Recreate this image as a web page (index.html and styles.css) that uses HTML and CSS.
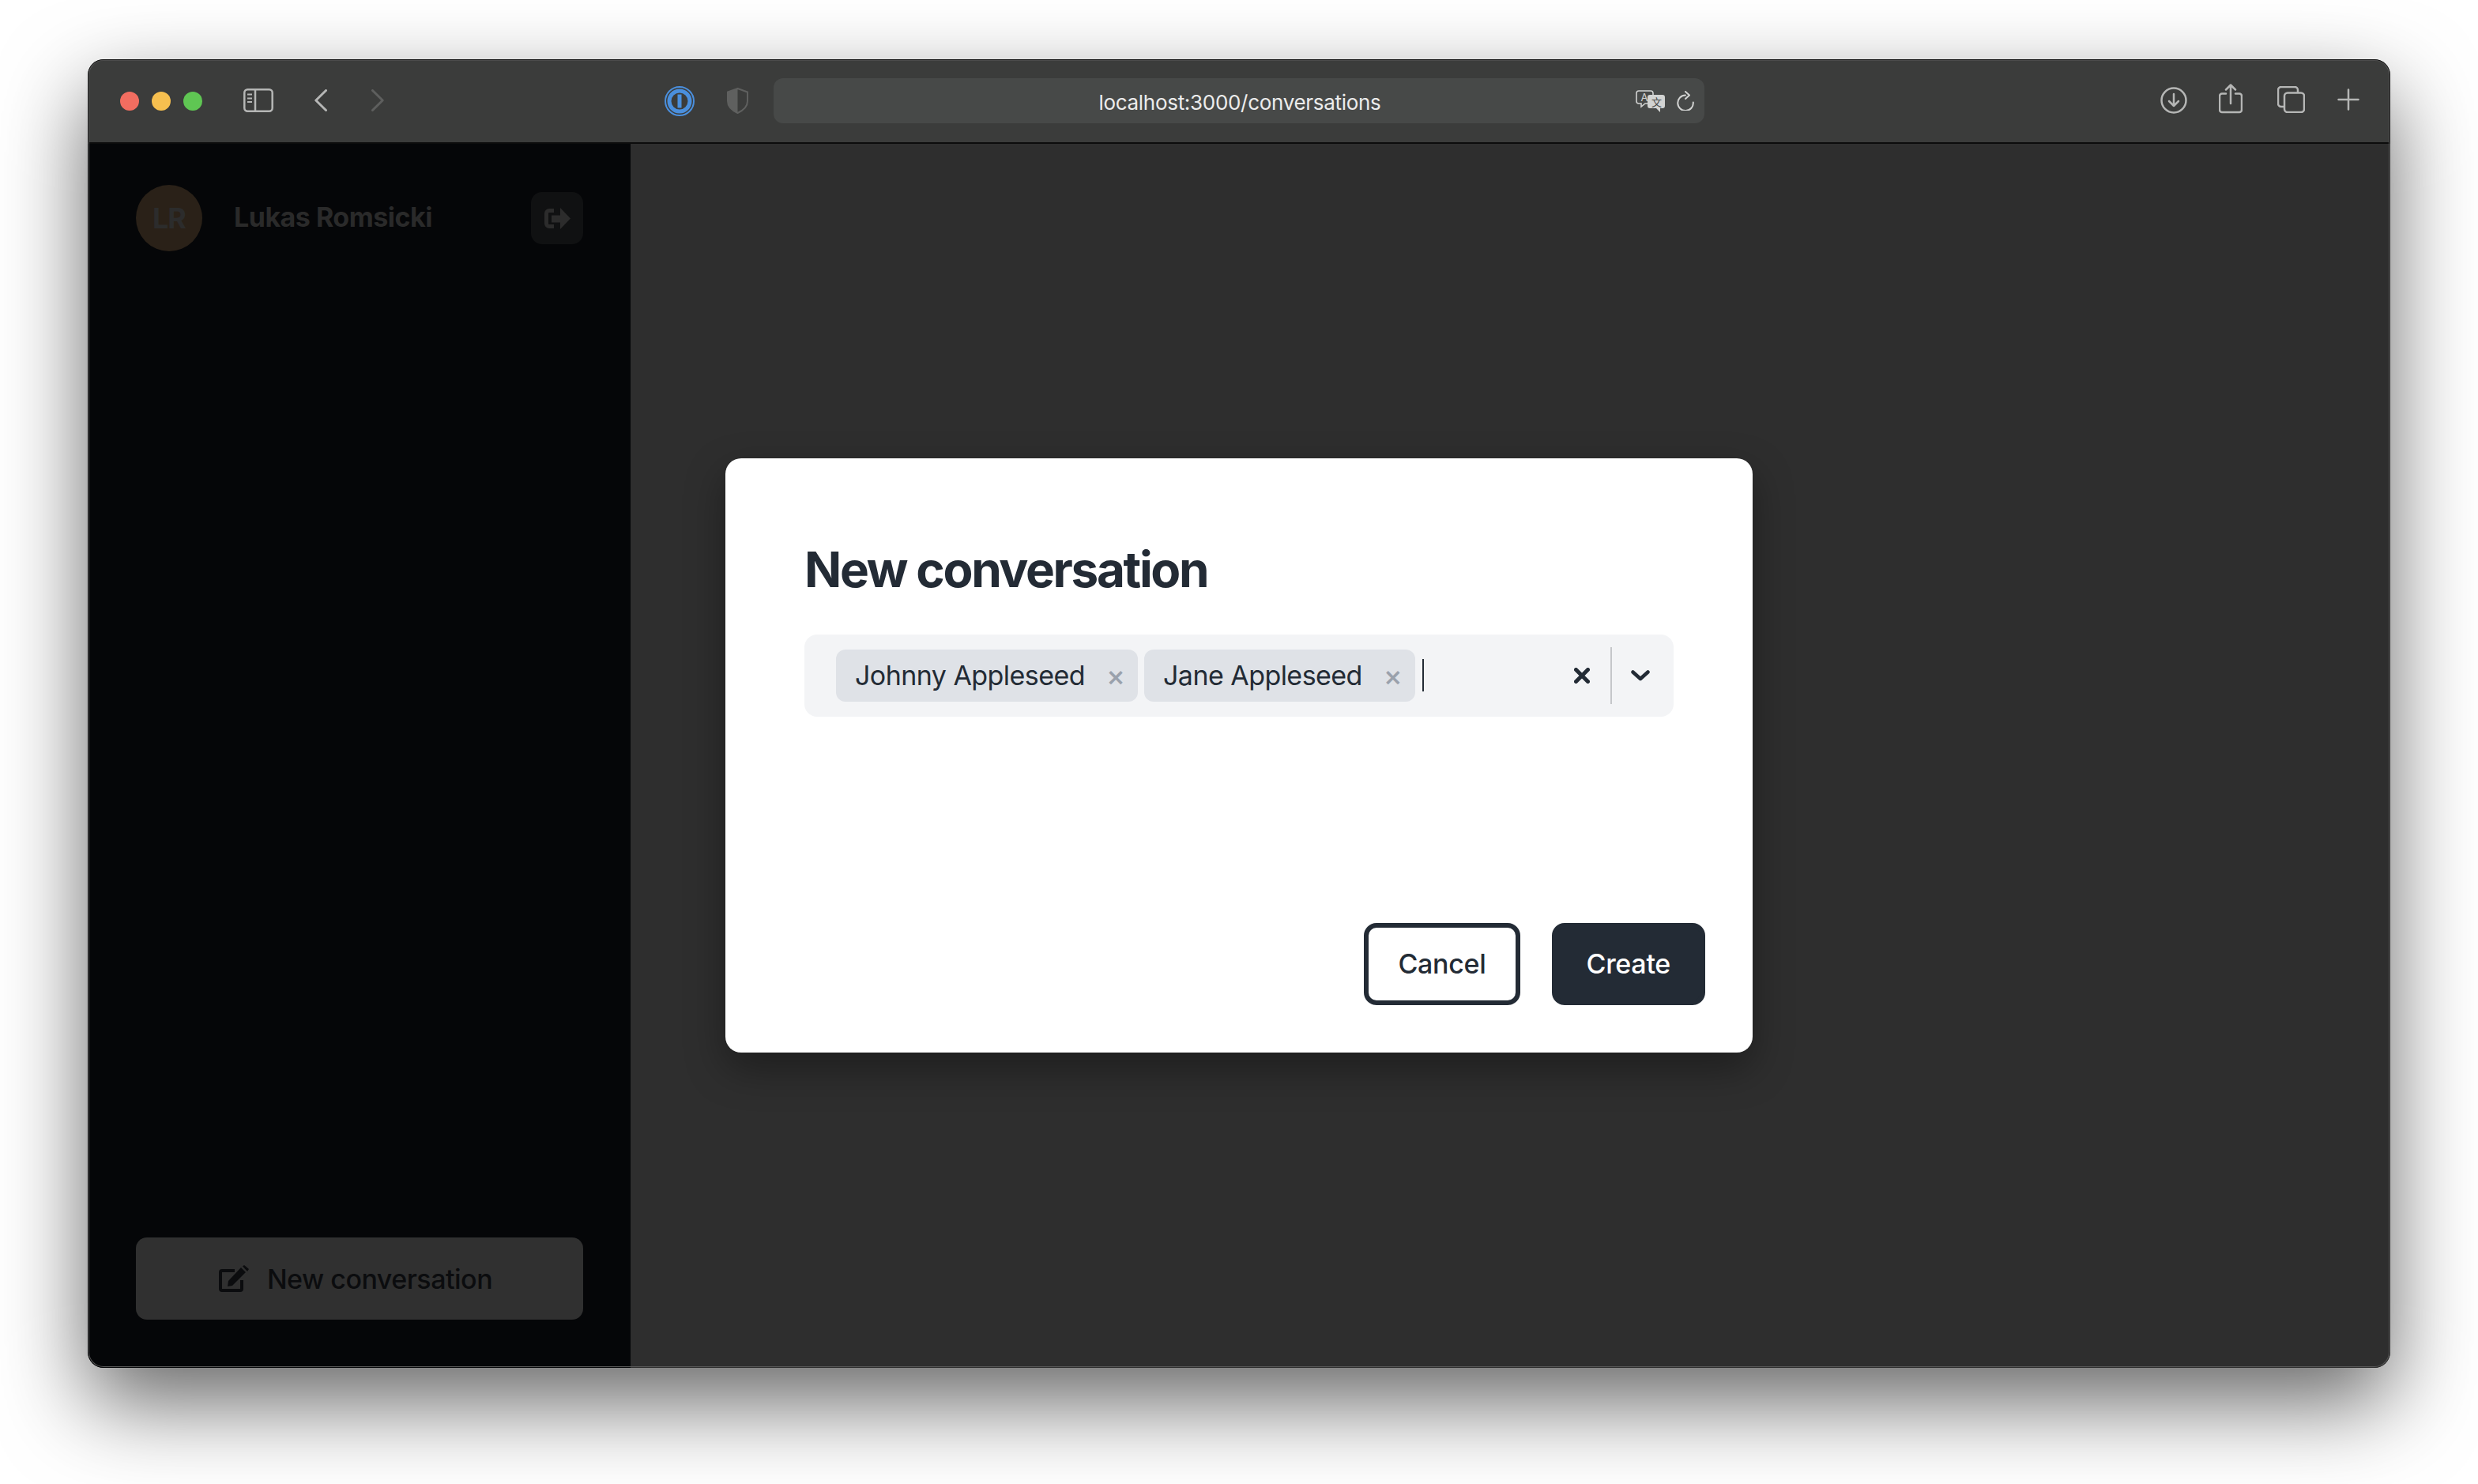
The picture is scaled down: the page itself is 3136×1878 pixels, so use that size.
FILE: index.html
```html
<!DOCTYPE html>
<html lang="en">
<head>
    <meta charset="UTF-8">
    <meta name="viewport" content="width=device-width, initial-scale=1.0">
    <title>New conversation</title>
    <link rel="stylesheet" href="styles.css">
</head>
<body>
    <div class="window">
        <header class="toolbar">
            <div class="lights">
                <span class="light red"></span>
                <span class="light yellow"></span>
                <span class="light green"></span>
            </div>
            <svg class="tool-sidebar" width="38" height="30" viewBox="0 0 38 30" fill="none" stroke="#b5b6b5" stroke-width="2.5">
                <rect x="1.3" y="1.3" width="35.4" height="27.4" rx="4"/>
                <path d="M15 1.5v27"/>
                <path d="M5 7.5h6M5 12.5h6M5 17h6" stroke-width="2"/>
            </svg>
            <svg class="tool-back" width="16" height="28" viewBox="0 0 16 28" fill="none" stroke="#b5b6b5" stroke-width="3" stroke-linecap="round" stroke-linejoin="round">
                <path d="M14.5 1.5 1.8 14l12.7 12.5"/>
            </svg>
            <svg class="tool-forward" width="16" height="28" viewBox="0 0 16 28" fill="none" stroke="#5e5f5e" stroke-width="3" stroke-linecap="round" stroke-linejoin="round">
                <path d="M1.5 1.5 14.2 14 1.5 26.5"/>
            </svg>
            <svg class="tool-password" width="38" height="38" viewBox="0 0 38 38" fill="none" stroke="#4a8fdd">
                <circle cx="19" cy="19" r="18" stroke-width="2"/>
                <circle cx="19" cy="19" r="13" stroke-width="5"/>
                <path d="M19 10.5v17" stroke-width="5"/>
            </svg>
            <svg class="tool-shield" width="27" height="33" viewBox="0 0 27 33">
                <path d="M13.5 1 26 5.5V17c0 7-5 11.5-12.5 15C6 28.5 1 24 1 17V5.5z" fill="none" stroke="#5f605f" stroke-width="2"/>
                <path d="M13.5 1v31C6 28.5 1 24 1 17V5.5z" fill="#5f605f"/>
            </svg>
            <div class="urlbar">
                <span class="url">localhost:3000/conversations</span>
                <svg class="tool-translate" width="37" height="29" viewBox="0 0 37 29">
                    <path d="M4 1h15a3 3 0 0 1 3 3v10a3 3 0 0 1-3 3h-7l-5 4v-4H4a3 3 0 0 1-3-3V4a3 3 0 0 1 3-3z" fill="none" stroke="#d2d3d2" stroke-width="1.6"/>
                    <text x="6.5" y="14" class="translate-a">A</text>
                    <path d="M18 6h16a3 3 0 0 1 3 3v11a3 3 0 0 1-3 3h-3v5l-5-5h-8a3 3 0 0 1-3-3V9a3 3 0 0 1 3-3z" fill="#d2d3d2"/>
                    <text x="20" y="20" class="translate-b">文</text>
                </svg>
                <svg class="tool-reload" width="22" height="25" viewBox="0 0 22 25" fill="none" stroke="#d2d3d2" stroke-width="2" stroke-linecap="round" stroke-linejoin="round">
                    <path d="M11 5.5A9.8 9.8 0 1 0 20.8 14.5"/>
                    <path d="M11 1l5 4.5-5 4.5"/>
                </svg>
            </div>
            <svg class="tool-download" width="34" height="34" viewBox="0 0 34 34" fill="none" stroke="#b5b6b5" stroke-width="2.5" stroke-linecap="round" stroke-linejoin="round">
                <circle cx="17" cy="17" r="15.5"/>
                <path d="M17 9v15M11 18l6 6 6-6"/>
            </svg>
            <svg class="tool-share" width="30" height="38" viewBox="0 0 30 38" fill="none" stroke="#b5b6b5" stroke-width="2.5" stroke-linecap="round" stroke-linejoin="round">
                <path d="M9 12.5H4a3 3 0 0 0-3 3V33a3 3 0 0 0 3 3h22a3 3 0 0 0 3-3V15.5a3 3 0 0 0-3-3h-5"/>
                <path d="M15 25V2M9 7.5 15 1.5l6 6"/>
            </svg>
            <svg class="tool-tabs" width="35" height="34" viewBox="0 0 35 34" fill="none" stroke="#b5b6b5" stroke-width="2.5">
                <path d="M8 26H5a4 4 0 0 1-4-4V5a4 4 0 0 1 4-4h17a4 4 0 0 1 4 4v3"/>
                <rect x="9" y="8.5" width="25" height="24.5" rx="4"/>
            </svg>
            <svg class="tool-plus" width="28" height="28" viewBox="0 0 28 28" fill="none" stroke="#b5b6b5" stroke-width="2.5" stroke-linecap="round">
                <path d="M14 1.5v25M1.5 14h25"/>
            </svg>
        </header>

        <div class="content">
            <aside class="sidebar">
                <div class="profile">
                    <div class="avatar">LR</div>
                    <span class="profile-name">Lukas Romsicki</span>
                    <div class="logout">
                        <svg width="33" height="27" viewBox="0 0 33 27" fill="#2c2c2c">
                            <path d="M12 3.5H6A3.5 3.5 0 0 0 2.5 7v13A3.5 3.5 0 0 0 6 23.5h6" fill="none" stroke="#2c2c2c" stroke-width="5"/>
                            <path d="M9 9.5h11V0l13 13.5L20 27v-8.5H9z"/>
                        </svg>
                    </div>
                </div>
                <div class="new-button">
                    <svg width="38" height="34" viewBox="0 0 38 34" fill="#0b0c0e">
                        <path d="M20 7H4a2 2 0 0 0-2 2v21a2 2 0 0 0 2 2h23a2 2 0 0 0 2-2V19" fill="none" stroke="#0b0c0e" stroke-width="4"/>
                        <path d="M11 27l1-7L28 3l6 6-17 17zM30 1.5l2-1.5 6 5-2 3z"/>
                    </svg>
                    <span>New conversation</span>
                </div>
            </aside>
            <main class="main"></main>

            <div class="overlay">
                <div class="modal">
                    <div class="modal-body">
                        <h1 class="modal-title">New conversation</h1>
                        <div class="select">
                            <div class="chip">
                                <span>Johnny Appleseed</span>
                                <span class="chip-remove">&times;</span>
                            </div>
                            <div class="chip">
                                <span>Jane Appleseed</span>
                                <span class="chip-remove">&times;</span>
                            </div>
                            <span class="caret"></span>
                            <svg class="select-clear" width="20" height="20" viewBox="0 0 20 20" fill="none" stroke="#232b35" stroke-width="5" stroke-linecap="round">
                                <path d="M2.5 2.5l15 15M17.5 2.5l-15 15"/>
                            </svg>
                            <span class="select-divider"></span>
                            <svg class="select-chevron" width="24" height="14" viewBox="0 0 24 14" fill="none" stroke="#232b35" stroke-width="4.5" stroke-linecap="round" stroke-linejoin="round">
                                <path d="M2.5 2.5 12 11l9.5-8.5"/>
                            </svg>
                        </div>
                    </div>
                    <div class="modal-actions">
                        <button class="btn btn-cancel">Cancel</button>
                        <button class="btn btn-create">Create</button>
                    </div>
                </div>
            </div>
        </div>
    </div>
</body>
</html>
```

FILE: styles.css
```css
html, body {
    height: 100%;
}
body {
    margin: 0;
    padding: 75px 111px 0 111px;
    box-sizing: border-box;
    overflow: hidden;
    background: #fff;
    font-family: 'Inter', sans-serif;
    color: #232b35;
}
.window {
    height: 1656px;
    display: flex;
    flex-direction: column;
    border-radius: 20px;
    overflow: hidden;
    box-shadow: 0 44px 110px rgba(0, 0, 0, 0.6);
    position: relative;
    outline: 1px solid #111;
    outline-offset: -1px;
}
.window::after {
    content: '';
    position: absolute;
    inset: 1px;
    border-radius: 19px;
    border: 1px solid #565656;
    border-top-color: #4a4a4a;
    pointer-events: none;
    z-index: 10;
}

/* browser chrome */
.toolbar {
    flex: 0 0 107px;
    box-sizing: border-box;
    display: flex;
    align-items: center;
    padding-left: 41px;
    background: #3b3c3b;
    border-bottom: 2px solid #0c0c0c;
}
.lights {
    display: flex;
    gap: 16px;
}
.light {
    width: 24px;
    height: 24px;
    border-radius: 50%;
}
.red { background: #f26d60; }
.yellow { background: #f6bf4f; }
.green { background: #5fc653; }
.tool-sidebar { margin: 0 0 2px 52px; }
.tool-back { margin: 0 0 2px 52px; }
.tool-forward { margin: 0 0 2px 56px; }
.tool-password { margin-left: 355px; }
.tool-shield { margin-left: 41px; }
.urlbar {
    margin-left: 32px;
    width: 1178px;
    height: 57px;
    position: relative;
    display: flex;
    align-items: center;
    justify-content: center;
    background: #474948;
    border-radius: 12px;
}
.url {
    margin: 3px 0 0 2px;
    font-size: 26px;
    color: #ececec;
    letter-spacing: -0.3px;
}
.tool-translate {
    position: absolute;
    right: 50px;
    top: 15px;
}
.tool-reload {
    position: absolute;
    right: 13px;
    top: 16px;
}
.translate-a {
    font-size: 13px;
    font-family: 'Inter', sans-serif;
    fill: #d2d3d2;
}
.translate-b {
    font-size: 13px;
    font-family: 'Noto Sans CJK SC', sans-serif;
    fill: #474948;
}
.tool-download { margin: 0 0 2px 577px; }
.tool-share { margin: 0 0 6px 40px; }
.tool-tabs { margin: 0 0 3px 44px; }
.tool-plus { margin: 0 0 4px 41px; }

/* app */
.content {
    flex: 1;
    display: flex;
    position: relative;
    min-height: 0;
}
.sidebar {
    width: 687px;
    box-sizing: border-box;
    display: flex;
    flex-direction: column;
    justify-content: space-between;
    padding: 52px 60px 61px 61px;
    background: #050608;
}
.profile {
    display: flex;
    align-items: center;
}
.avatar {
    width: 84px;
    height: 84px;
    border-radius: 50%;
    display: flex;
    align-items: center;
    justify-content: center;
    background: #2a2118;
    color: #2c2c2c;
    font-size: 36px;
    font-weight: 700;
    letter-spacing: -1px;
}
.profile-name {
    margin: 0 0 3px 40px;
    font-size: 34px;
    font-weight: 700;
    color: #2a2a2a;
    letter-spacing: -0.5px;
}
.logout {
    margin-left: auto;
    width: 66px;
    height: 66px;
    display: flex;
    align-items: center;
    justify-content: center;
    background: #101112;
    border-radius: 14px;
}
.new-button {
    height: 104px;
    box-sizing: border-box;
    padding-right: 10px;
    display: flex;
    align-items: center;
    justify-content: center;
    gap: 23px;
    background: #303030;
    border-radius: 14px;
    font-size: 34px;
    font-weight: 500;
    letter-spacing: -0.5px;
    color: #0b0c0e;
}
.main {
    flex: 1;
    background: #2e2e2e;
}

/* modal */
.overlay {
    position: absolute;
    inset: 0;
    padding-bottom: 2px;
    display: flex;
    align-items: center;
    justify-content: center;
}
.modal {
    width: 1300px;
    height: 752px;
    box-sizing: border-box;
    display: flex;
    flex-direction: column;
    justify-content: space-between;
    padding: 60px;
    background: #fff;
    border-radius: 20px;
    box-shadow: 0 20px 50px rgba(0, 0, 0, 0.35);
}
.modal-body {
    padding: 44px 40px 0;
}
.modal-title {
    margin: 0 0 45px;
    font-size: 62px;
    line-height: 1.2;
    font-weight: 700;
    letter-spacing: -2.35px;
    color: #232b35;
}
.select {
    height: 104px;
    box-sizing: border-box;
    display: flex;
    align-items: center;
    gap: 8px;
    padding: 0 30px 0 40px;
    background: #f3f4f6;
    border-radius: 16px;
}
.chip {
    height: 66px;
    box-sizing: border-box;
    display: flex;
    align-items: center;
    gap: 27px;
    padding: 0 20px 0 24px;
    background: #dfe2e7;
    border-radius: 12px;
    font-size: 34px;
    letter-spacing: -0.55px;
    white-space: nowrap;
}
.chip-remove {
    width: 20px;
    text-align: center;
    font-size: 36px;
    font-weight: 500;
    line-height: 1;
    letter-spacing: 0;
    color: #9aa1ac;
}
.caret {
    width: 2px;
    height: 41px;
    margin-left: 1px;
    background: #232b35;
}
.select-clear {
    margin-left: auto;
}
.select-divider {
    width: 2px;
    height: 72px;
    margin: 0 16px 0 18px;
    background: #c5c7ca;
}
.modal-actions {
    display: flex;
    justify-content: flex-end;
    gap: 40px;
}
.btn {
    height: 104px;
    padding: 0 38px;
    box-sizing: border-box;
    border: 6px solid #232b35;
    border-radius: 16px;
    font-family: inherit;
    font-size: 34px;
    font-weight: 500;
    letter-spacing: -0.3px;
}
.btn-cancel {
    padding: 0 37px;
    background: #fff;
    color: #232b35;
}
.btn-create {
    background: #232b35;
    color: #fff;
}
```
